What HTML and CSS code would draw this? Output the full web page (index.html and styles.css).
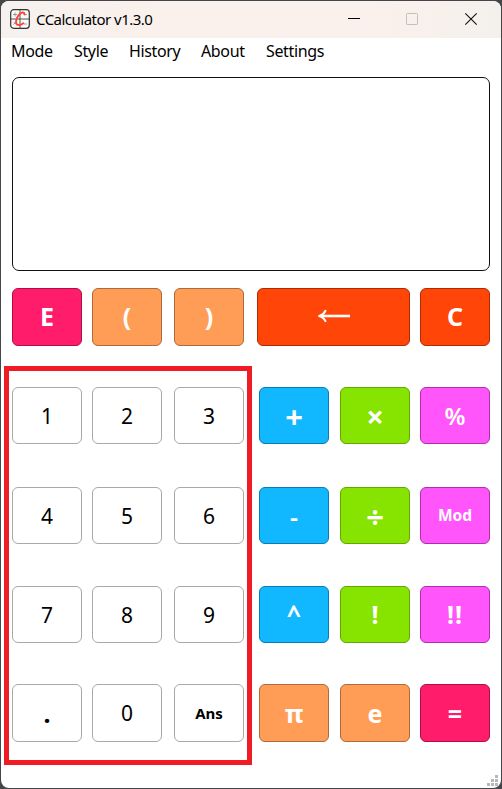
FILE: index.html
```html
<!DOCTYPE html>
<html lang="en">
<head>
<meta charset="utf-8">
<title>CCalculator v1.3.0</title>
<link rel="stylesheet" href="styles.css">
</head>
<body>
<div class="window">
  <header class="titlebar">
    <svg class="logo" width="20" height="20" viewBox="0 0 20 20" fill="none">
      <rect x=".7" y=".7" width="18.6" height="18.6" rx="3" fill="#fbf8f6" stroke="#333" stroke-width="1.2"/>
      <path d="M1 10H19M10 1V19" stroke="#444" stroke-width=".9"/>
      <path d="M3 5.500H7M5 3.500V7.500M14 5.500H17M3.500 13L6 15.500M6 13L3.500 15.500M14 15H17" stroke="#888" stroke-width=".8"/>
      <path d="M14.500 5.500C14.500 3 12 3 10 4.800C7.500 7 5.300 11.500 6.200 14.200C7 16.800 10.500 16.500 13.300 14.300" stroke="#ff4438" stroke-width="1.900" stroke-linecap="round"/>
    </svg>
    <h1 class="title">CCalculator v1.3.0</h1>
    <svg class="controls" width="132" height="14" viewBox="0 0 132 14" fill="none">
      <path d="M0 6.500H12" stroke="#000"/>
      <rect x="58.500" y="1.500" width="11" height="11" rx=".7" stroke="#c4bfbc"/>
      <path d="M117.300 1.300L128.700 12.700M128.700 1.300L117.300 12.700" stroke="#111" stroke-width="1.1"/>
    </svg>
  </header>
  <nav class="menu">
    <span class="m-mode">Mode</span><span class="m-style">Style</span><span class="m-history">History</span><span class="m-about">About</span><span class="m-settings">Settings</span>
  </nav>
  <main>
    <div class="display"></div>
    <div class="keys top">
      <button class="key pink">E</button>
      <button class="key orange">(</button>
      <button class="key orange">)</button>
      <button class="key red wide" aria-label="Backspace"><svg width="32" height="14" viewBox="0 0 32 14" fill="none" stroke="#fff"><path d="M1.500 7H32" stroke-width="2.600"/><path d="M7.800 1.200Q6 5.500 1.500 7Q6 8.500 7.800 12.800" stroke-width="2"/></svg></button>
      <button class="key red">C</button>
    </div>
    <div class="keys pad">
      <button class="key num">1</button><button class="key num">2</button><button class="key num">3</button>
      <button class="key blue math">+</button><button class="key green math">×</button><button class="key violet pct">%</button>
      <button class="key num">4</button><button class="key num">5</button><button class="key num">6</button>
      <button class="key blue minus">-</button><button class="key green math">÷</button><button class="key violet small">Mod</button>
      <button class="key num">7</button><button class="key num">8</button><button class="key num">9</button>
      <button class="key blue caret">^</button><button class="key green bang">!</button><button class="key violet double">!!</button>
      <button class="key num dot">.</button><button class="key num">0</button><button class="key num small">Ans</button>
      <button class="key orange">π</button><button class="key orange">e</button><button class="key pink">=</button>
    </div>
  </main>
  <div class="highlight"></div>
  <svg class="grip" width="11" height="11" viewBox="0 0 11 11" fill="#b8b8b8"><path d="M8 0h3v3h-3zM4 4h3v3h-3zM8 4h3v3h-3zM0 8h3v3h-3zM4 8h3v3h-3zM8 8h3v3h-3z"/></svg>
</div>
</body>
</html>
```
FILE: styles.css
```css
* { box-sizing: border-box; }
body {
  margin: 0;
  width: 502px;
  height: 789px;
  padding: 1px;
  overflow: hidden;
  background: #45464a;
  font-family: "Noto Sans", "Open Sans", sans-serif;
  color: #000;
}
.window {
  position: relative;
  width: 500px;
  height: 787px;
  border-radius: 8px;
  background: #fff;
  overflow: hidden;
}
.titlebar {
  display: flex;
  align-items: center;
  height: 37px;
  padding-left: 9px;
  background: linear-gradient(90deg, #f6f1ef, #faf0ec 30%, #faf0ec 75%, #f4f1ec);
}
.logo, .controls { margin-top: -1px; }
.title {
  margin: 0 0 2px 6px;
  width: 312px;
  font-size: 15px;
  font-weight: 400;
  line-height: 20px;
  letter-spacing: -.52px;
  white-space: nowrap;
}
.menu {
  display: flex;
  height: 27px;
  padding-left: 10px;
  font-size: 16px;
  letter-spacing: -.35px;
  line-height: 27px;
}
.m-mode { width: 63px; }
.m-style { width: 55px; }
.m-history { width: 72px; }
.m-about { width: 65px; }
.menu span { white-space: nowrap; }
main { padding: 12px 11px 0; }
.display {
  height: 193.500px;
  border: 1.500px solid #111;
  border-radius: 7px;
}
.keys { display: grid; }
.top {
  grid-template-columns: 80px 82px 83px 163px 70px;
  grid-template-rows: 58px;
  margin-top: 17.500px;
}
.pad {
  grid-template-columns: 80px 82px 85px 81px 80px 70px;
  grid-template-rows: 100px 99px 98px 58px;
  margin-top: 41px;
}
.key {
  width: 70px;
  height: 57px;
  padding: 0;
  display: flex;
  align-items: center;
  justify-content: center;
  border: 1px solid;
  border-radius: 6px;
  font: 700 25px/36px "Noto Sans", "Open Sans", sans-serif;
  color: #fff;
}
.top .key { padding-bottom: 2px; }
.top .key, .pad .key:nth-child(n+19) { height: 58px; }
.key.wide { width: 153px; }
.num { background: #fff; border-color: #a8a8a8; color: #000; font-weight: 400; font-size: 21px; }
.dot { font-weight: 700; font-size: 25px; }
.key.small { font-weight: 700; font-size: 15px; }
.key.violet.small { font-size: 15.500px; padding-bottom: 2px; }
.math { font-size: 31px; }
.pink { background: #ff1c6a; border-color: #ad1048; }
.orange { background: #ff9d57; border-color: #ad6a3a; }
.red { background: #ff4507; border-color: #ad2c04; }
.blue { background: #11b7ff; border-color: #0b7cae; }
.green { background: #87e300; border-color: #62a800; }
.violet { background: #ff55fa; border-color: #ac30aa; }
.pct { font-size: 24px; font-weight: 600; }
.minus { font-weight: 600; }
.caret { padding-bottom: 4px; }
.bang, .double { padding-bottom: 2px; }
.double { letter-spacing: 1px; }
.highlight {
  position: absolute;
  left: 3px;
  top: 365px;
  width: 248px;
  height: 399px;
  border: 5px solid #ef1c23;
  pointer-events: none;
}
.grip { position: absolute; right: 3px; bottom: 2px; }
```
